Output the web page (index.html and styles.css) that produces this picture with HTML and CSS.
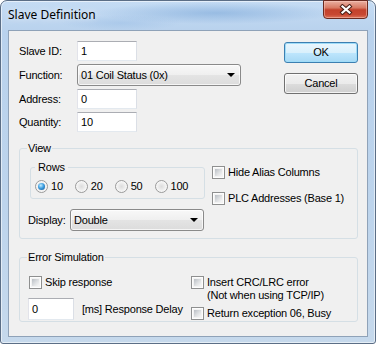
FILE: index.html
```html
<!DOCTYPE html>
<html lang="en">
<head>
  <meta charset="UTF-8" />
  <title>Slave Definition</title>
  <link rel="stylesheet" href="styles.css">
</head>
<body>
  <div class="window">
    <div class="titlebar">
      <span class="title">Slave Definition</span>
      <div class="close">
        <svg width="14" height="11" viewBox="0 0 14 11">
          <path d="M3.5 2.5 L10.5 8.5 M10.5 2.5 L3.5 8.5" stroke="#4a2018" stroke-width="4.2" stroke-linecap="square" fill="none"/>
          <path d="M3.5 2.5 L10.5 8.5 M10.5 2.5 L3.5 8.5" stroke="#ffffff" stroke-width="2.2" stroke-linecap="square" fill="none"/>
        </svg>
      </div>
    </div>

    <div class="client">
      <div class="top">
        <div class="fields">
          <span class="lbl">Slave ID:</span>
          <span class="edit">1</span>
          <span class="lbl">Function:</span>
          <span class="combo combo-function">01 Coil Status (0x)<i class="arrow"></i></span>
          <span class="lbl">Address:</span>
          <span class="edit">0</span>
          <span class="lbl">Quantity:</span>
          <span class="edit">10</span>
        </div>
        <div class="buttons">
          <div class="btn default">OK</div>
          <div class="btn">Cancel</div>
        </div>
      </div>

      <fieldset class="group view">
        <legend>View</legend>
        <div class="view-top">
          <fieldset class="group rows">
            <legend>Rows</legend>
            <div class="radio-row">
              <span class="opt"><i class="radio on"></i>10</span>
              <span class="opt"><i class="radio"></i>20</span>
              <span class="opt"><i class="radio"></i>50</span>
              <span class="opt"><i class="radio"></i>100</span>
            </div>
          </fieldset>
          <div class="checks">
            <span class="opt"><i class="check"></i>Hide Alias Columns</span>
            <span class="opt"><i class="check"></i>PLC Addresses (Base 1)</span>
          </div>
        </div>
        <div class="display-row">
          <span class="display-lbl">Display:</span>
          <span class="combo combo-display">Double<i class="arrow"></i></span>
        </div>
      </fieldset>

      <fieldset class="group errors">
        <legend>Error Simulation</legend>
        <div class="err-body">
          <div class="err-left">
            <span class="opt skip"><i class="check"></i>Skip response</span>
            <div class="delay-row">
              <span class="edit delay">0</span>
              <span>[ms] Response Delay</span>
            </div>
          </div>
          <div class="err-right">
            <span class="opt"><i class="check"></i><span>Insert CRC/LRC error<br>(Not when using TCP/IP)</span></span>
            <span class="opt"><i class="check"></i>Return exception 06, Busy</span>
          </div>
        </div>
      </fieldset>
    </div>
  </div>
</body>
</html>
```

FILE: styles.css
```css
* {
  box-sizing: border-box;
  margin: 0;
  padding: 0;
}

body {
  width: 376px;
  height: 344px;
  overflow: hidden;
  background: #ffffff;
  font-family: "Liberation Sans", Arial, sans-serif;
  font-size: 11px;
  line-height: 13px;
  letter-spacing: -0.2px;
  color: #000;
}

/* window frame */
.window {
  width: 376px;
  height: 344px;
  display: flex;
  flex-direction: column;
  border: 1px solid #5b6e86;
  border-radius: 7px 7px 3px 3px;
  box-shadow: inset 0 0 0 1px rgba(255, 255, 255, 0.55);
  background:
    radial-gradient(ellipse 120px 11px at 215px 12px, rgba(120, 165, 215, 0.55), transparent),
    radial-gradient(ellipse 60px 8px at 120px 22px, rgba(140, 180, 225, 0.35), transparent),
    linear-gradient(to bottom, #c5dcf4 0, #b9d2ed 30px, #bdd4ec 60%, #c6d9ec 100%);
}

.titlebar {
  height: 29px;
  display: flex;
  align-items: flex-start;
  padding: 0 7px;
}

.title {
  flex: 1;
  margin-top: 6px;
  font-family: "Noto Sans", sans-serif;
  font-size: 12px;
  line-height: 16px;
  letter-spacing: 0;
  text-shadow: 0 0 6px rgba(255, 255, 255, 0.9);
}

.close {
  width: 45px;
  height: 19px;
  margin-top: -1px;
  display: flex;
  align-items: center;
  justify-content: center;
  border: 1px solid #6a2a20;
  border-radius: 0 0 4px 4px;
  background: linear-gradient(to bottom, #eab0a2 0, #d87a64 40%, #c3412b 52%, #c84832 80%, #dc7259 100%);
  box-shadow: inset 0 0 0 1px rgba(255, 210, 200, 0.45);
}

/* dialog body */
.client {
  height: 307px;
  margin: 0 7px;
  padding: 10px 9px 0 10px;
  background: #f0f0f0;
  border: 1px solid #8fa2b8;
}

.top {
  display: flex;
  justify-content: space-between;
  align-items: flex-start;
}

.fields {
  display: grid;
  grid-template-columns: 58px auto;
  row-gap: 3px;
  align-items: center;
}

.edit {
  width: 60px;
  height: 20px;
  padding: 0 3px;
  line-height: 18px;
  background: #fff;
  border: 1px solid;
  border-color: #abadb3 #dbdfe6 #e3e9ef #e2e3ea;
}

.combo {
  height: 22px;
  display: flex;
  align-items: center;
  justify-content: space-between;
  padding: 0 5px 0 3px;
  border: 1px solid #8a8a8a;
  border-radius: 3px;
  background: linear-gradient(to bottom, #f8f8f8 0, #efefef 50%, #e4e4e4 51%, #dcdcdc 100%);
  box-shadow: inset 0 0 0 1px rgba(255, 255, 255, 0.7);
}

.combo-function {
  width: 164px;
}

.combo-display {
  width: 134px;
}

.arrow {
  width: 0;
  height: 0;
  border-left: 4px solid transparent;
  border-right: 4px solid transparent;
  border-top: 4px solid #000;
}

.buttons {
  display: flex;
  flex-direction: column;
  gap: 10px;
  padding-top: 1px;
}

.btn {
  width: 74px;
  height: 21px;
  display: flex;
  align-items: center;
  justify-content: center;
  border: 1px solid #707070;
  border-radius: 3px;
  background: linear-gradient(to bottom, #f2f2f2 0, #ebebeb 50%, #dddddd 51%, #cfcfcf 100%);
  box-shadow: inset 0 0 0 1px rgba(255, 255, 255, 0.75);
}

.btn.default {
  border-color: #3c7fb1;
  background: linear-gradient(to bottom, #eaf6fd 0, #d9f0fc 50%, #bee6fd 51%, #a7d9f5 100%);
  box-shadow: inset 0 0 0 1px #9fdcf8;
}

/* group boxes */
.group {
  min-width: 0;
  border: 1px solid #d5dfe5;
  border-radius: 3px;
}

.group legend {
  padding: 0 1px;
  line-height: 13px;
}

.view {
  margin-top: 10px;
  padding: 6px 7px 7px 7px;
}

.view-top {
  display: flex;
  align-items: flex-start;
  gap: 7px;
}

.rows {
  width: 175px;
  margin-left: 3px;
  padding: 6px 4px 5px 4px;
}

.rows legend {
  padding: 0 3px;
}

.radio-row {
  display: flex;
  gap: 12px;
}

.opt {
  display: inline-flex;
  align-items: flex-start;
  gap: 3px;
}

.radio {
  width: 13px;
  height: 13px;
  flex: none;
  display: flex;
  align-items: center;
  justify-content: center;
  border: 1px solid #9a9a9a;
  border-radius: 50%;
  background: radial-gradient(circle at 50% 50%, #dcdcdc 0, #ececec 40%, #f8f8f8 70%, #e2e2e2 100%);
}

.radio.on::after {
  content: "";
  width: 7px;
  height: 7px;
  border-radius: 50%;
  background: radial-gradient(circle at 40% 35%, #c5edff 0, #3fa0e2 45%, #124f8c 100%);
}

.check {
  width: 13px;
  height: 13px;
  flex: none;
  padding: 2px;
  border: 1px solid #8e8f8f;
  background: linear-gradient(135deg, #b9bec4 0, #dfe1e3 55%, #f7f7f7 100%) content-box, #f3f3f3;
  box-shadow: inset 0 0 0 1px #fdfdfd;
}

.checks {
  display: flex;
  flex-direction: column;
  gap: 13px;
  padding-top: 5px;
}

.display-row {
  display: flex;
  align-items: center;
  margin: 4px 0 0 1px;
}

.display-lbl {
  width: 42px;
}

.errors {
  margin-top: 12px;
  padding: 12px 7px 1px 7px;
}

.err-body {
  display: flex;
}

.err-left {
  width: 164px;
  display: flex;
  flex-direction: column;
  align-items: flex-start;
  gap: 9px;
}

.skip {
  margin-left: 2px;
}

.delay-row {
  display: flex;
  align-items: center;
  gap: 8px;
  margin-left: 1px;
}

.edit.delay {
  width: 46px;
  height: 22px;
  line-height: 20px;
}

.err-right {
  display: flex;
  flex-direction: column;
  gap: 5px;
}
```
